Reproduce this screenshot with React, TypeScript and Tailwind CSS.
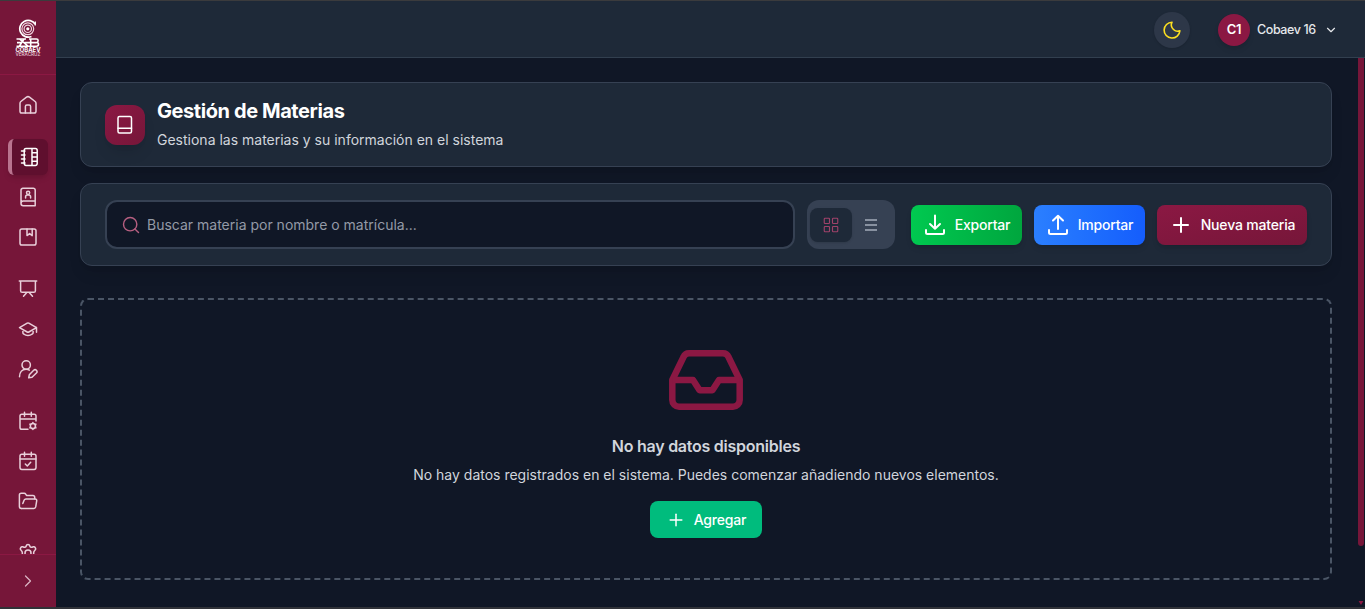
import React from "react";
import { ChevronDown, ChevronRight, LayoutGrid, Plus, Search } from "lucide-react";

type IconProps = { children: React.ReactNode; className?: string };

function Icon({ children, className = "" }: IconProps) {
  return (
    <svg
      viewBox="0 0 20 20"
      fill="none"
      stroke="currentColor"
      strokeWidth="1.5"
      strokeLinecap="round"
      strokeLinejoin="round"
      className={`size-5 shrink-0 ${className}`}
    >
      {children}
    </svg>
  );
}

const homeIcon = (
  <Icon>
    <path d="M2 8.4c0-.8.3-1.4.9-1.9l5.6-4.3c.9-.7 2.1-.7 3 0l5.6 4.3c.6.5.9 1.1.9 1.9v7.8c0 1-.8 1.8-1.8 1.8H3.8c-1 0-1.8-.8-1.8-1.8z" />
    <path d="M7.4 18v-6.600c0-.8.6-1.400 1.400-1.400h2.400c.8 0 1.400.6 1.400 1.400V18" />
  </Icon>
);

const notebookIcon = (
  <Icon>
    <path d="M6 1.600h9.400a1.800 1.800 0 0 1 1.800 1.800v13.200a1.800 1.800 0 0 1-1.800 1.800H6a1.800 1.800 0 0 1-1.800-1.800V3.400A1.800 1.800 0 0 1 6 1.600zM12 1.600v16.800M12 5.800h5M12 10h5M12 14.200h5M1.500 4h3.500M1.500 8h3.500M1.500 12h3.500M1.500 16h3.500" />
  </Icon>
);

const contactBookIcon = (
  <Icon>
    <path d="M17.200 14V3.200a1.900 1.900 0 0 0-1.900-1.900H4.900A1.900 1.900 0 0 0 3 3.200v13.300M3 16.500c0-1.300 1-2.400 2.300-2.400h11.900v4.600H5.200C4 18.700 3 17.700 3 16.500z" />
    <circle cx="10.100" cy="5.800" r="1.600" />
    <path d="M7.600 11V9.800c0-1 .8-1.800 1.800-1.800h1.400c1 0 1.800.8 1.800 1.800V11" />
  </Icon>
);

const bookmarkIcon = (
  <Icon>
    <rect x="2" y="2" width="16" height="16" rx="1.800" />
    <path d="M9 2v6.600l2.600-2 2.600 2V2" />
  </Icon>
);

const boardIcon = (
  <Icon>
    <path d="M1.300 2h17.400M2.600 2v9.700c0 1 .7 1.600 1.600 1.600h11.600c.9 0 1.600-.6 1.600-1.600V2M8.600 13.700 5.500 17.300M11.400 13.700l3.100 3.600" />
  </Icon>
);

const graduationIcon = (
  <Icon>
    <path d="M1.500 8.600 9.200 4.200c.5-.3 1.100-.3 1.600 0l7.700 4.400-7.700 4.400c-.5.300-1.100.300-1.600 0zM18.500 8.600v4.600M4.900 10.700v3c0 .5.200.9.600 1.200 2.700 2 6.300 2 9 0 .4-.3.600-.7.600-1.200v-3" />
  </Icon>
);

const userPenIcon = (
  <Icon>
    <circle cx="8.200" cy="6" r="4.200" />
    <path d="M1.500 17.800c0-4.600 2.700-7.600 6.600-7.600 1.300 0 2.400.3 3.200.9M10.700 18.800l.6-3 4.400-4.500a1.900 1.900 0 0 1 2.700 2.700L14 18.300z" />
  </Icon>
);

const calendarCogIcon = (
  <Icon>
    <path d="M10 18.300H3.800A1.800 1.800 0 0 1 2 16.500V5c0-1 .8-1.800 1.800-1.800h12.400C17.200 3.200 18 4 18 5v5M2 8h16M6.500 1.300v4M13.300 1.300v4" />
    <circle cx="14.900" cy="15" r="2.600" />
    <path d="M14.900 11.400v1M14.900 17.600v1M11.800 13.200l.9.500M17.100 16.300l.9.500M11.800 16.800l.9-.5M17.100 13.700l.9-.5" />
  </Icon>
);

const calendarCheckIcon = (
  <Icon>
    <rect x="2" y="3.200" width="16" height="15.200" rx="1.800" />
    <path d="M2 8h16M6.500 1.300v4M13.300 1.300v4M7.300 13l2 2 3.400-3.700" />
  </Icon>
);

const folderIcon = (
  <Icon>
    <path d="M3.200 17.400c-1 0-1.800-.8-1.800-1.800V4.100c0-1 .8-1.800 1.800-1.800h3c.6 0 1.200.3 1.500.8l.8 1.300h6.400c1 0 1.800.8 1.800 1.800v1.600" />
    <path d="M4.800 12.500 6.200 9c.3-.7.9-1.100 1.700-1.100h9.300c1 0 1.700.9 1.500 1.900l-1 6.100c-.2.900-.9 1.500-1.800 1.500H3.200" />
  </Icon>
);

const gearIcon = (
  <Icon>
    <path d="M8.200 3c.4-1.900 3.200-1.900 3.600 0 .2 1 1.300 1.500 2.300 1.200l1.200-.4c1.800-.4 3.100 1.900 1.800 3.200-.9.800-1.500 1.800-1.500 3s.6 2.200 1.500 3c1.300 1.300 0 3.600-1.800 3.200l-1.200-.4c-1-.3-2.100.2-2.300 1.200-.4 1.900-3.200 1.900-3.600 0-.2-1-1.300-1.500-2.300-1.200l-1.200.4C2.900 16.600 1.600 14.300 2.900 13c.9-.8 1.500-1.800 1.500-3s-.6-2.200-1.500-3C1.600 5.700 2.900 3.400 4.700 3.800l1.200.4c1 .3 2.100-.2 2.300-1.200z" />
    <circle cx="10" cy="10" r="3" />
  </Icon>
);

const groups = [
  [{ name: "Inicio", icon: homeIcon }],
  [
    { name: "Materias", icon: notebookIcon, active: true },
    { name: "Docentes", icon: contactBookIcon },
    { name: "Cursos", icon: bookmarkIcon },
  ],
  [
    { name: "Grupos", icon: boardIcon },
    { name: "Alumnos", icon: graduationIcon },
    { name: "Usuarios", icon: userPenIcon },
  ],
  [
    { name: "Periodos", icon: calendarCogIcon },
    { name: "Asistencias", icon: calendarCheckIcon },
    { name: "Archivos", icon: folderIcon },
  ],
  [{ name: "Ajustes", icon: gearIcon }],
] as { name: string; icon: React.ReactNode; active?: boolean }[][];

function Logo() {
  return (
    <svg viewBox="0 0 28 38" className="h-[38px] w-7" fill="none" stroke="#fff">
      <path d="M21.300 5.300A8.400 8.400 0 1 0 17.500 17.500" strokeWidth="1.700" />
      <path d="M21.300 2.500v4" strokeWidth="1.300" />
      <circle cx="13.800" cy="9.800" r="5.900" strokeWidth="1.200" stroke="#eed3de" />
      <circle cx="13.800" cy="9.800" r="3.700" strokeWidth="1.200" stroke="#eed3de" />
      <circle cx="13.800" cy="9.800" r="1.600" fill="#fff" stroke="none" />
      <path
        d="M2.500 20h9.500M15 20h7.500c2.200 0 2.200 3.300 0 3.500 2.700 0 2.700 3.700 0 3.700H2.500M5.500 20l8.500 7.200M16.700 20v7.200M5.500 27l4.500-7M3 23.600h4.500M10.500 23.600h12"
        strokeWidth="1.600"
      />
      <text x="1.500" y="33.400" fill="#fff" stroke="none" fontSize="5.600" fontWeight="700" fontFamily="Inter, sans-serif" textLength="25" lengthAdjust="spacingAndGlyphs">
        COBAEV
      </text>
      <text x="1.500" y="37.200" fill="#e9cfda" stroke="none" fontSize="4.200" fontWeight="500" fontFamily="Inter, sans-serif" textLength="25" lengthAdjust="spacingAndGlyphs">
        VERACRUZ
      </text>
    </svg>
  );
}

function Sidebar() {
  return (
    <aside className="flex w-14 shrink-0 flex-col bg-[#761639]">
      <div className="flex h-[74px] shrink-0 items-center justify-center border-b border-[#8b1843]">
        <Logo />
      </div>
      <nav className="flex min-h-0 flex-1 flex-col gap-4 overflow-hidden px-2 pt-3">
        {groups.map((group, i) => (
          <div key={i} className="flex flex-col gap-1">
            {group.map((item) => (
              <a
                key={item.name}
                aria-label={item.name}
                className={
                  item.active
                    ? "flex h-9 shrink-0 items-center justify-center rounded-md border-l-4 border-[#b9748f] bg-[#5f0f2e] text-white shadow-md"
                    : "flex h-9 shrink-0 items-center justify-center rounded-md text-[#e9cfda]"
                }
              >
                {item.icon}
              </a>
            ))}
          </div>
        ))}
      </nav>
      <div className="flex h-[53px] shrink-0 items-center justify-center border-t border-[#8b1843] text-[#d9b3c3]">
        <ChevronRight className="size-5" strokeWidth={1.5} />
      </div>
    </aside>
  );
}

function TransferIcon({ up = false }: { up?: boolean }) {
  return (
    <svg viewBox="0 0 24 24" className="size-6" fill="none" stroke="currentColor" strokeWidth="2" strokeLinecap="round" strokeLinejoin="round">
      <path d="M3 17v2.500c0 .8.700 1.500 1.500 1.500h15c.8 0 1.500-.7 1.500-1.500V17" />
      <path d={up ? "M12 16V3M7 7.500 12 2.700l5 4.800" : "M12 2.500v13M7 11l5 4.800 5-4.800"} />
    </svg>
  );
}

export default function App() {
  return (
    <div className="flex h-[609px] w-full flex-col overflow-hidden border-t border-b-2 border-t-[#3b3b3d] border-b-[#303238] bg-[#101726] font-['Inter',sans-serif] antialiased">
      <div className="flex min-h-0 flex-1">
        <Sidebar />
        <div className="flex min-w-0 flex-1 flex-col">
          <header className="flex h-[57px] shrink-0 items-center justify-end border-b border-[#323f4f] bg-[#1e2938] pt-0.5 pr-[27px]">
            <button aria-label="Tema" className="mr-7 flex size-9 items-center justify-center rounded-full bg-[#2d3748] text-[#fde020] shadow-sm">
              <svg viewBox="0 0 20 20" className="size-5" fill="none" stroke="currentColor" strokeWidth="1.600" strokeLinejoin="round">
                <path d="M10 2.200A7.900 7.900 0 1 0 17.900 10.700C15.600 11.700 13.300 11.200 11.500 9.500 9.300 7.500 8.700 4.800 10 2.200z" />
              </svg>
            </button>
            <div className="flex size-8 items-center justify-center rounded-full bg-[#8b1843] text-[13px] font-semibold tracking-[-0.3px] text-white shadow-md">C1</div>
            <span className="ml-[7px] w-[59px] text-[12.5px] font-medium tracking-[-0.4px] whitespace-nowrap text-gray-200">Cobaev 16</span>
            <ChevronDown className="ml-2 size-3.5 text-gray-200" strokeWidth={2} />
          </header>

          <div className="flex min-h-0 flex-1">
            <main className="flex min-w-0 flex-1 flex-col px-6 pt-6">
              <section className="flex h-[85px] shrink-0 items-center gap-3 rounded-xl border border-[#364153] bg-[#1e2938] px-6 shadow-lg">
                <div className="flex size-10 items-center justify-center rounded-xl bg-linear-to-br from-[#8b1843] to-[#761639] text-white shadow-lg">
                  <Icon>
                    <rect x="3" y="1.500" width="13.500" height="16.500" rx="1.500" />
                    <path d="M3 13.300h13.500" />
                  </Icon>
                </div>
                <div className="flex flex-col gap-1 pb-0.5">
                  <h1 className="text-xl leading-7 font-bold tracking-[-0.42px] text-white">Gestión de Materias</h1>
                  <p className="text-sm leading-[22px] text-gray-300">Gestiona las materias y su información en el sistema</p>
                </div>
              </section>

              <section className="mt-4 flex h-[83px] shrink-0 items-center rounded-xl border border-[#364153] bg-[#1e2938] px-6 shadow-lg">
                <div className="flex h-[49px] flex-1 items-center gap-1.5 rounded-xl border-2 border-[#364153] bg-[#101726] px-3.5">
                  <Search className="size-5 text-[#b65f80]" strokeWidth={1.7} />
                  <span className="pt-px text-sm text-[#949aa6]">Buscar materia por nombre o matrícula...</span>
                </div>
                <div className="mr-4 ml-3 flex h-[49px] w-[88px] items-center rounded-xl bg-[#364153] p-[3px]">
                  <div className="flex h-[34px] w-[42px] items-center justify-center rounded-lg bg-[#1e2938] shadow-sm">
                    <LayoutGrid className="size-[18px] text-[#a0426a]" strokeWidth={1.5} />
                  </div>
                  <div className="flex flex-1 flex-col items-center gap-[3px] pt-px pr-0.5">
                    <span className="h-[2px] w-3 bg-[#8891a0]" />
                    <span className="h-[2px] w-3 bg-[#8891a0]" />
                    <span className="h-[2px] w-3 bg-[#8891a0]" />
                  </div>
                </div>
                <div className="flex gap-3 text-sm font-medium text-white">
                  <button className="flex h-10 w-[111px] items-center justify-center gap-2 rounded-lg bg-linear-to-r from-[#00c950] to-[#00a63e] tracking-[-0.2px] shadow-md">
                    <TransferIcon />
                    Exportar
                  </button>
                  <button className="flex h-10 w-[111px] items-center justify-center gap-2 rounded-lg bg-linear-to-r from-[#2b7fff] to-[#155dfc] tracking-[-0.2px] shadow-md">
                    <TransferIcon up />
                    Importar
                  </button>
                  <button className="flex h-10 w-[150px] items-center justify-center gap-2 rounded-lg bg-linear-to-br from-[#8b1843] to-[#761639] tracking-[-0.18px] shadow-md">
                    <Plus className="size-6" strokeWidth={2} />
                    Nueva materia
                  </button>
                </div>
              </section>

              <section className="mt-8 flex h-[282px] shrink-0 flex-col items-center rounded-lg border-2 border-dashed border-[#4a5565] pt-[50px]">
                <svg viewBox="0 0 74 60" className="h-[60px] w-[74px]" fill="none" stroke="#8b1843" strokeWidth="6.500" strokeLinejoin="round">
                  <path d="M3.300 30v20a6.700 6.700 0 0 0 6.700 6.700h54a6.700 6.700 0 0 0 6.700-6.700V30L59.500 7a6 6 0 0 0-5.500-3.700H20A6 6 0 0 0 14.500 7z" />
                  <path d="M3.300 30H24l6.600 10.300h12.800L50 30h20.700" />
                </svg>
                <h2 className="mt-6 text-base font-semibold tracking-[-0.25px] text-gray-300">No hay datos disponibles</h2>
                <p className="mt-[7px] text-sm text-gray-300">No hay datos registrados en el sistema. Puedes comenzar añadiendo nuevos elementos.</p>
                <button className="mt-4 flex h-[37px] w-28 items-center justify-center gap-2 rounded-lg bg-[#00bc7d] text-sm font-medium tracking-[-0.2px] text-white">
                  <Plus className="size-5" strokeWidth={1.8} />
                  Agregar
                </button>
              </section>
            </main>
            <div className="flex w-[9px] shrink-0 flex-col items-start justify-between pl-0.5">
              <div className="h-[488px] w-1.5 rounded-b-full bg-[#761639]" />
              <svg viewBox="0 0 6 5" className="mb-0.5 h-1 w-1.5" fill="#8b1843">
                <path d="M0 0h6L3 5z" />
              </svg>
            </div>
          </div>
        </div>
      </div>
    </div>
  );
}
